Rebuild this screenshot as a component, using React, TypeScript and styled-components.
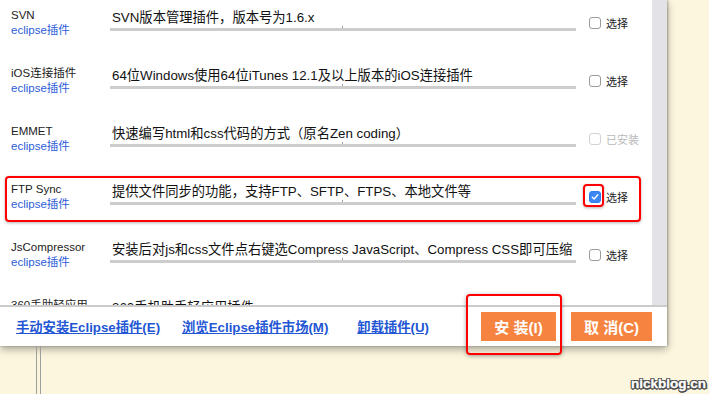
import React from 'react';
import styled, { createGlobalStyle } from 'styled-components';

const GlobalStyle = createGlobalStyle`
  html, body {
    margin: 0;
    padding: 0;
    background: #fcf6df;
  }
  body {
    font-family: "Liberation Sans", "Noto Sans CJK SC", sans-serif;
  }
`;

const Stage = styled.div`
  position: relative;
  width: 709px;
  height: 394px;
  overflow: hidden;
  background: #fcf6df;
  display: flex;
  flex-direction: column;
`;

const Dialog = styled.div`
  width: 667px;
  background: #fff;
  box-shadow: 0 3px 8px rgba(0, 0, 0, 0.35), 1px 0 2px rgba(0, 0, 0, 0.25);
  display: flex;
  flex-direction: column;
`;

const Body = styled.div`
  display: flex;
  height: 305px;
`;

const ListArea = styled.div`
  width: 652px;
  height: 305px;
  overflow: hidden;
`;

const Scrollbar = styled.div`
  width: 15px;
  background: #e3e2e6;
`;

const Row = styled.div`
  position: relative;
  display: flex;
  height: 58px;
  padding-left: 11px;
  box-sizing: border-box;
`;

const NameCol = styled.div`
  width: 99px;
  padding-top: 8px;
  font-size: 11.5px;
  line-height: 14px;
  color: #222;
`;

const Sub = styled.div`
  color: #2c5cd8;
  margin-top: 1px;
`;

const DescField = styled.div`
  position: relative;
  width: 466px;
  box-sizing: border-box;
  margin-top: 10px;
  height: 21px;
  padding: 0 0 0 2px;
  font-size: 13.3px;
  line-height: 16px;
  color: #111;
  white-space: nowrap;
  overflow: hidden;
  border-bottom: 3px solid #cdcdcd;

  &::after {
    content: '';
    position: absolute;
    left: 232px;
    bottom: 0;
    width: 1px;
    height: 2px;
    background: #9c9c9c;
  }
`;

const CheckCol = styled.label<{ $disabled?: boolean }>`
  display: flex;
  align-items: center;
  gap: 5px;
  margin-left: 13px;
  padding-top: 16px;
  height: 13px;
  font-size: 11px;
  color: ${(p) => (p.$disabled ? '#b9b9b9' : '#222')};
`;

const Box = styled.span<{ $checked?: boolean; $disabled?: boolean }>`
  display: inline-flex;
  align-items: center;
  justify-content: center;
  width: 12px;
  height: 12px;
  box-sizing: border-box;
  border-radius: 3px;
  border: 1px solid
    ${(p) => (p.$checked ? '#2f7cf0' : p.$disabled ? '#d2d2d2' : '#9a9a9a')};
  background: ${(p) => (p.$checked ? '#3b86f3' : '#fff')};
`;

const RowMark = styled.div`
  position: absolute;
  left: 5px;
  top: 2px;
  width: 636px;
  height: 46px;
  box-sizing: border-box;
  border: 2px solid #f00;
  border-radius: 4px;
  box-shadow: 0 1px 3px rgba(0, 0, 0, 0.3);
  pointer-events: none;
`;

const BoxMark = styled.div`
  position: absolute;
  left: 583px;
  top: 10px;
  width: 21px;
  height: 23px;
  box-sizing: border-box;
  border: 2px solid #f00;
  border-radius: 4px;
  box-shadow: 0 1px 3px rgba(0, 0, 0, 0.3);
  pointer-events: none;
`;

const Footer = styled.div`
  display: flex;
  align-items: center;
  height: 39px;
  border-top: 2px solid #cbcbcb;
  padding: 0 15px 0 16px;
`;

const Links = styled.div`
  display: flex;
`;

const Link = styled.a<{ $ml?: number }>`
  margin-left: ${(p) => p.$ml ?? 0}px;
  font-size: 13.3px;
  font-weight: bold;
  color: #2356d4;
  text-decoration: underline;
  cursor: pointer;
`;

const Buttons = styled.div`
  margin-left: auto;
  display: flex;
  gap: 15px;
`;

const Button = styled.button<{ $w: number }>`
  position: relative;
  width: ${(p) => p.$w}px;
  height: 29px;
  border: none;
  background: #f68440;
  color: #fff;
  font-family: "Liberation Sans", "Noto Sans CJK SC", sans-serif;
  font-size: 15px;
  font-weight: bold;
  padding: 0;
  white-space: pre;
`;

const ButtonMark = styled.div`
  position: absolute;
  left: -15px;
  top: -18px;
  width: 96px;
  height: 61px;
  box-sizing: border-box;
  border: 2px solid #f00;
  border-radius: 4px;
  box-shadow: 0 1px 4px rgba(0, 0, 0, 0.35);
  pointer-events: none;
`;

const Gutter = styled.div`
  margin-left: 36px;
  width: 3px;
  flex: 1;
  border-left: 1px solid #9e9e9e;
  border-right: 1px solid #9e9e9e;
`;

const Watermark = styled.div`
  position: absolute;
  right: 3px;
  bottom: 3px;
  font-size: 13.5px;
  font-weight: bold;
  color: #fff;
  text-shadow: 1px 0 0 #444, -1px 0 0 #444, 0 1px 0 #444, 0 -1px 0 #444,
    1px 1px 0 #444, -1px -1px 0 #444, 1px -1px 0 #444, -1px 1px 0 #444,
    2px 1px 0 #666, 0 2px 0 #666;
  -webkit-text-stroke: 0.3px #fff;
`;

type Plugin = {
  name: string;
  desc: string;
  state: 'open' | 'installed' | 'checked';
};

const plugins: Plugin[] = [
  { name: 'SVN', desc: 'SVN版本管理插件，版本号为1.6.x', state: 'open' },
  { name: 'iOS连接插件', desc: '64位Windows使用64位iTunes 12.1及以上版本的iOS连接插件', state: 'open' },
  { name: 'EMMET', desc: '快速编写html和css代码的方式（原名Zen coding）', state: 'installed' },
  { name: 'FTP Sync', desc: '提供文件同步的功能，支持FTP、SFTP、FTPS、本地文件等', state: 'checked' },
  { name: 'JsCompressor', desc: '安装后对js和css文件点右键选Compress JavaScript、Compress CSS即可压缩', state: 'open' },
  { name: '360手助轻应用', desc: '360手机助手轻应用插件', state: 'open' },
];

const Check = () => (
  <svg width="8" height="8" viewBox="0 0 8 8">
    <path d="M1.3 4.2 L3.2 6 L6.8 1.8" fill="none" stroke="#fff" strokeWidth="1.4" strokeLinecap="round" strokeLinejoin="round" />
  </svg>
);

const App: React.FC = () => {
  return (
    <Stage>
      <GlobalStyle />
      <Dialog>
        <Body>
          <ListArea>
            {plugins.map((p) => (
              <Row key={p.name}>
                <NameCol>
                  {p.name}
                  <Sub>eclipse插件</Sub>
                </NameCol>
                <DescField>{p.desc}</DescField>
                <CheckCol $disabled={p.state === 'installed'}>
                  <Box $checked={p.state === 'checked'} $disabled={p.state === 'installed'}>
                    {p.state === 'checked' && <Check />}
                  </Box>
                  {p.state === 'installed' ? '已安装' : '选择'}
                </CheckCol>
                {p.state === 'checked' && (
                  <>
                    <RowMark />
                    <BoxMark />
                  </>
                )}
              </Row>
            ))}
          </ListArea>
          <Scrollbar />
        </Body>
        <Footer>
          <Links>
            <Link>手动安装Eclipse插件(E)</Link>
            <Link $ml={22}>浏览Eclipse插件市场(M)</Link>
            <Link $ml={29}>卸载插件(U)</Link>
          </Links>
          <Buttons>
            <Button $w={75}>
              {'安 装(I)'}
              <ButtonMark />
            </Button>
            <Button $w={81}>{'取 消(C)'}</Button>
          </Buttons>
        </Footer>
      </Dialog>
      <Gutter />
      <Watermark>nickblog.cn</Watermark>
    </Stage>
  );
};

export default App;
